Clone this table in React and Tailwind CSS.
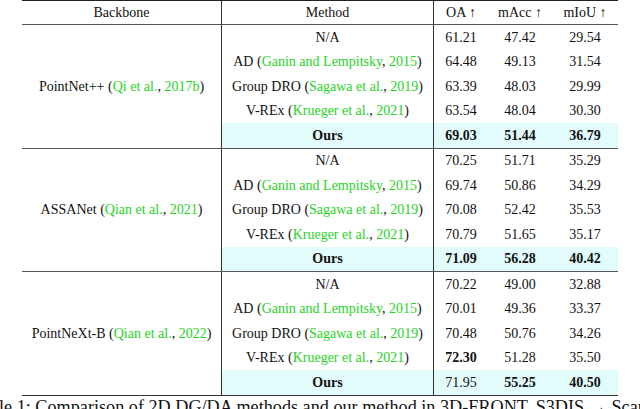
import React from 'react';

const groups = [
  {
    name: 'PointNet++',
    cite: 'Qi et al., 2017b',
    rows: [
      ['61.21', '47.42', '29.54'],
      ['64.48', '49.13', '31.54'],
      ['63.39', '48.03', '29.99'],
      ['63.54', '48.04', '30.30'],
      ['69.03', '51.44', '36.79'],
    ],
    bold: [[4, 0], [4, 1], [4, 2]],
  },
  {
    name: 'ASSANet',
    cite: 'Qian et al., 2021',
    rows: [
      ['70.25', '51.71', '35.29'],
      ['69.74', '50.86', '34.29'],
      ['70.08', '52.42', '35.53'],
      ['70.79', '51.65', '35.17'],
      ['71.09', '56.28', '40.42'],
    ],
    bold: [[4, 0], [4, 1], [4, 2]],
  },
  {
    name: 'PointNeXt-B',
    cite: 'Qian et al., 2022',
    rows: [
      ['70.22', '49.00', '32.88'],
      ['70.01', '49.36', '33.37'],
      ['70.48', '50.76', '34.26'],
      ['72.30', '51.28', '35.50'],
      ['71.95', '55.25', '40.50'],
    ],
    bold: [[3, 0], [4, 1], [4, 2]],
  },
];

const methods = [
  { name: 'N/A' },
  { name: 'AD', cite: 'Ganin and Lempitsky, 2015' },
  { name: 'Group DRO', cite: 'Sagawa et al., 2019' },
  { name: 'V-REx', cite: 'Krueger et al., 2021' },
  { name: 'Ours', ours: true },
];

function Cite({ text }) {
  // split the year so the comma stays black like the paper
  const i = text.lastIndexOf(', ');
  return (
    <>
      {' ('}
      <span className="text-[#1fd41f]">{text.slice(0, i)}</span>
      {', '}
      <span className="text-[#1fd41f]">{text.slice(i + 2)}</span>
      {')'}
    </>
  );
}

export default function App() {
  return (
    <div
      className="w-[640px] h-[409px] bg-white overflow-hidden text-[#111] text-[14px]"
      style={{ fontFamily: '"Liberation Serif", "Times New Roman", serif' }}
    >
      <div className="ml-[22px] w-[596px] border-t border-[#222]">
        {/* header */}
        <div className="flex h-[24px] items-center border-b border-[#555]">
          <div className="w-[200px] h-full flex items-center justify-center border-r border-[#333]">Backbone</div>
          <div className="w-[212px] h-full flex items-center justify-center border-r border-[#333]">Method</div>
          <div className="w-[54px] text-center">OA ↑</div>
          <div className="w-[64px] text-center">mAcc ↑</div>
          <div className="w-[66px] text-center">mIoU ↑</div>
        </div>

        {groups.map((g, gi) => (
          <div key={g.name} className={`flex ${gi < 2 ? 'border-b border-[#555]' : 'border-b border-[#333]'}`}>
            <div className="w-[200px] flex items-center justify-center border-r border-[#333]">
              <span>
                {g.name}
                <Cite text={g.cite} />
              </span>
            </div>
            <div className="flex flex-col">
              {methods.map((m, ri) => (
                <div
                  key={m.name}
                  className={`flex h-[24.5px] items-center ${m.ours ? 'bg-[#e2fcfc]' : ''}`}
                >
                  <div className={`w-[212px] h-full flex items-center justify-center border-r border-[#333] ${m.ours ? 'font-bold' : ''}`}>
                    <span>
                      {m.name}
                      {m.cite && <Cite text={m.cite} />}
                    </span>
                  </div>
                  {g.rows[ri].map((v, ci) => {
                    const isBold = g.bold.some(([r, c]) => r === ri && c === ci);
                    const w = ci === 0 ? 'w-[54px]' : ci === 1 ? 'w-[64px]' : 'w-[66px]';
                    return (
                      <div key={ci} className={`${w} text-center ${isBold ? 'font-bold' : ''}`}>
                        {v}
                      </div>
                    );
                  })}
                </div>
              ))}
            </div>
          </div>
        ))}
      </div>

      {/* caption, cut off at the frame edges */}
      <div className="ml-[-28px] whitespace-nowrap text-[18.2px] leading-[22px]">
        Table 1: Comparison of 2D DG/DA methods and our method in 3D-FRONT, S3DIS → ScanNet
      </div>
    </div>
  );
}
